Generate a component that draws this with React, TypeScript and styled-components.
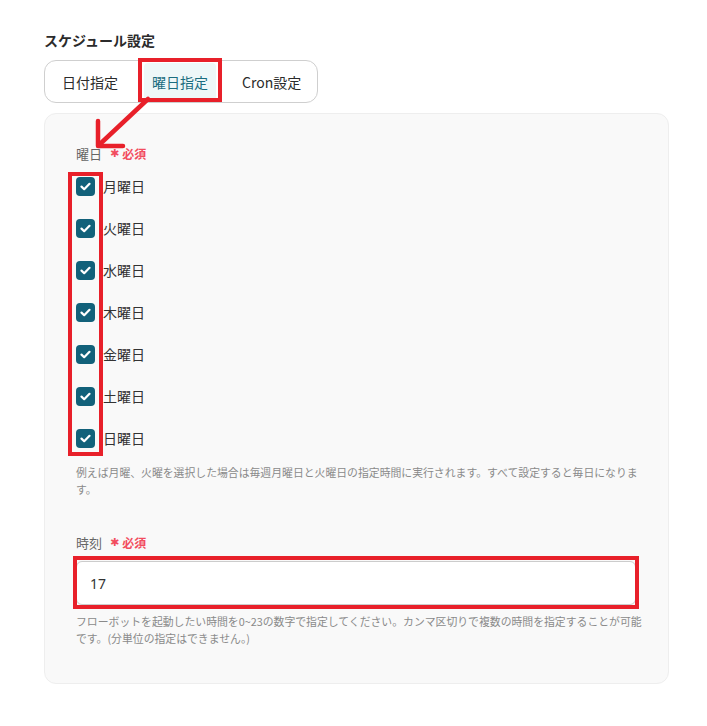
import React, { useState } from "react";
import styled, { createGlobalStyle, css } from "styled-components";

const GlobalStyle = createGlobalStyle`
  body {
    margin: 0;
    background: #ffffff;
    font-family: "Noto Sans CJK JP", "Noto Sans", sans-serif;
    color: #333333;
  }
`;

const RED = "#e8202a";
const TEAL = "#12617a";

const Page = styled.div`
  position: relative;
  padding: 29px 38px 40px 44px;
`;

const Title = styled.h2`
  margin: 0;
  font-size: 14px;
  line-height: 22px;
  font-weight: 700;
  color: #2b2b2b;
`;

const Segments = styled.div`
  display: inline-flex;
  align-items: center;
  gap: 18px;
  margin-top: 9px;
  padding: 2px 8px 2px 9px;
  border: 1px solid #cfcfcf;
  border-radius: 12px;
  background: #ffffff;
`;

const Tab = styled.button<{ $active: boolean; $marked?: boolean }>`
  position: relative;
  height: 37px;
  padding: 0 8px;
  border: none;
  border-radius: 4px;
  background: ${(p) => (p.$active ? "#eef7f8" : "transparent")};
  color: ${(p) => (p.$active ? "#1b6d7f" : "#2b2b2b")};
  font-family: inherit;
  font-size: 14px;
  cursor: pointer;
  ${(p) =>
    p.$marked &&
    css`
      &::after {
        content: "";
        position: absolute;
        top: -5px;
        bottom: -2px;
        left: -6px;
        right: -6px;
        border: 4px solid ${RED};
      }
    `}
`;

const Panel = styled.section`
  margin-top: 10px;
  padding: 30px 32px 36px 31px;
  background: #f9f9f9;
  border: 1px solid #eeeeee;
  border-radius: 12px;
`;

const Label = styled.div<{ $gap?: number }>`
  display: flex;
  align-items: center;
  gap: 8px;
  margin-top: ${(p) => p.$gap ?? 0}px;
  font-size: 13px;
  line-height: 20px;
  color: #666666;
`;

const Required = styled.span`
  display: inline-flex;
  align-items: center;
  gap: 3px;
  font-size: 12px;
  font-weight: 700;
  color: #f24d5e;
`;

const Star = styled.span`
  font-family: "DejaVu Sans", sans-serif;
  font-size: 11px;
`;

const DayList = styled.div`
  position: relative;
  display: flex;
  flex-direction: column;
  gap: 18px;
  margin-top: 10px;
`;

const Marker = styled.div`
  position: absolute;
  top: -2px;
  bottom: -6px;
  left: -8px;
  width: 35px;
  border: 4px solid ${RED};
  box-sizing: border-box;
  pointer-events: none;
`;

const DayRow = styled.label`
  display: flex;
  align-items: center;
  gap: 8px;
  height: 24px;
  font-size: 14px;
  color: #333333;
  cursor: pointer;
`;

const Box = styled.span<{ $checked: boolean }>`
  display: inline-flex;
  align-items: center;
  justify-content: center;
  width: 19px;
  height: 19px;
  border-radius: 4px;
  background: ${(p) => (p.$checked ? TEAL : "#ffffff")};
  border: ${(p) => (p.$checked ? "none" : "1px solid #999")};
  box-sizing: border-box;
`;

const Help = styled.p<{ $gap: number }>`
  margin: ${(p) => p.$gap}px -8px 0 0;
  font-size: 10.85px;
  line-height: 17px;
  color: #8a8a8a;
`;

const InputWrap = styled.div`
  position: relative;
  margin-top: 8px;
  &::after {
    content: "";
    position: absolute;
    top: -5px;
    bottom: -4px;
    left: -3px;
    right: -3px;
    border: 4px solid ${RED};
    pointer-events: none;
  }
`;

const Input = styled.input`
  display: block;
  width: 100%;
  height: 44px;
  box-sizing: border-box;
  padding: 0 13px;
  border: 1px solid #cccccc;
  border-radius: 6px;
  background: #ffffff;
  font-family: "Noto Sans", "Noto Sans CJK JP", sans-serif;
  font-size: 14px;
  color: #333333;
  outline: none;
`;

const Arrow = styled.svg`
  position: absolute;
  left: 90px;
  top: 92px;
  pointer-events: none;
`;

const Check = () => (
  <svg width="11" height="9" viewBox="0 0 11 9">
    <path d="M1.5 4.6 L4.2 7.2 L9.5 1.8" fill="none" stroke="#fff" strokeWidth="2.2" strokeLinecap="round" strokeLinejoin="round" />
  </svg>
);

const DAYS = ["月曜日", "火曜日", "水曜日", "木曜日", "金曜日", "土曜日", "日曜日"];
const TABS = ["日付指定", "曜日指定", "Cron設定"];

const RequiredMark = () => (
  <Required>
    <Star>✱</Star>必須
  </Required>
);

export default function App() {
  const [tab, setTab] = useState(1);
  const [checked, setChecked] = useState<boolean[]>(DAYS.map(() => true));
  const [hour, setHour] = useState("17");

  const toggle = (i: number) =>
    setChecked((c) => c.map((v, j) => (j === i ? !v : v)));

  return (
    <>
      <GlobalStyle />
      <Page>
        <Title>スケジュール設定</Title>
        <Segments>
          {TABS.map((t, i) => (
            <Tab key={t} $active={tab === i} $marked={i === 1} onClick={() => setTab(i)}>
              {t}
            </Tab>
          ))}
        </Segments>

        <Panel>
          <Label>
            曜日
            <RequiredMark />
          </Label>
          <DayList>
            <Marker />
            {DAYS.map((d, i) => (
              <DayRow key={d} onClick={() => toggle(i)}>
                <Box $checked={checked[i]}>{checked[i] && <Check />}</Box>
                {d}
              </DayRow>
            ))}
          </DayList>
          <Help $gap={14}>
            例えば月曜、火曜を選択した場合は毎週月曜日と火曜日の指定時間に実行されます。すべて設定すると毎日になります。
          </Help>

          <Label $gap={35}>
            時刻
            <RequiredMark />
          </Label>
          <InputWrap>
            <Input value={hour} onChange={(e) => setHour(e.target.value)} />
          </InputWrap>
          <Help $gap={8}>
            フローボットを起動したい時間を0~23の数字で指定してください。カンマ区切りで複数の時間を指定することが可能です。(分単位の指定はできません。)
          </Help>
        </Panel>

        <Arrow width="66" height="60" viewBox="0 0 66 60">
          <line x1="58" y1="7" x2="10" y2="52" stroke={RED} strokeWidth="4.5" strokeLinecap="round" />
          <polyline points="8,29 8,54 33,54" fill="none" stroke={RED} strokeWidth="4.5" strokeLinecap="round" strokeLinejoin="round" />
        </Arrow>
      </Page>
    </>
  );
}
